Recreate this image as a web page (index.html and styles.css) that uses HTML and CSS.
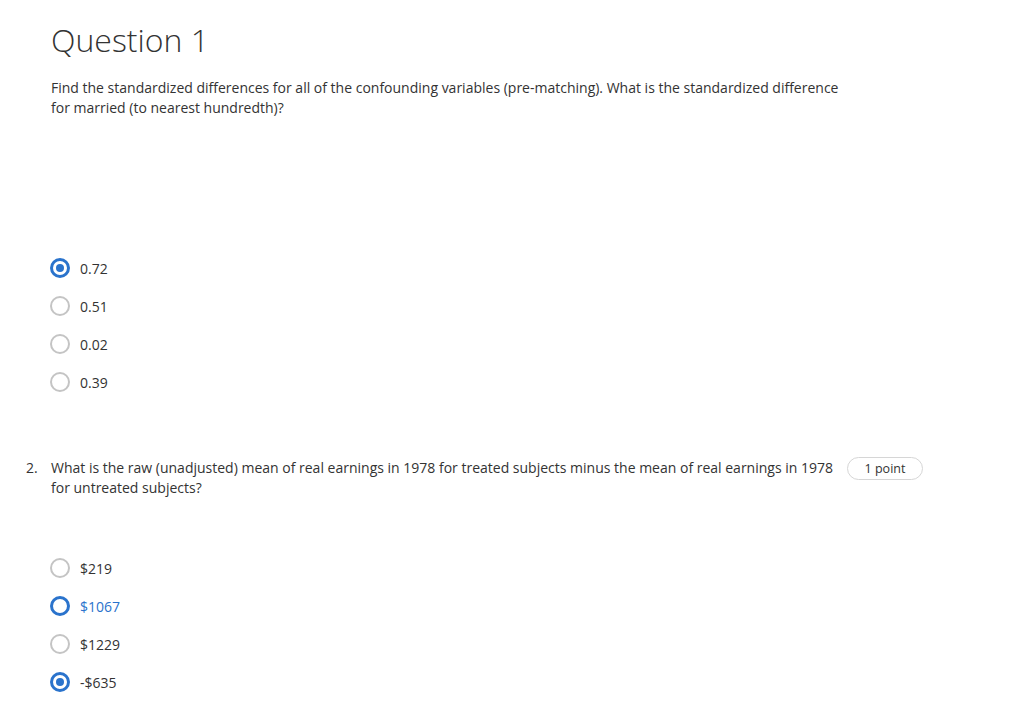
FILE: index.html
```html
<!DOCTYPE html>
<html>
<head>
<meta charset="utf-8">
<link rel="stylesheet" href="styles.css">
</head>
<body>
<div class="page">
  <h1 class="title">Question 1</h1>
  <p class="prompt">Find the standardized differences for all of the confounding variables (pre-matching). What is the standardized difference for married (to nearest hundredth)?</p>
  <div class="options first">
    <div class="option"><span class="radio checked"></span><span class="label">0.72</span></div>
    <div class="option"><span class="radio"></span><span class="label">0.51</span></div>
    <div class="option"><span class="radio"></span><span class="label">0.02</span></div>
    <div class="option"><span class="radio"></span><span class="label">0.39</span></div>
  </div>
  <div class="question">
    <span class="num">2.</span>
    <p class="prompt q2">What is the raw (unadjusted) mean of real earnings in 1978 for treated subjects minus the mean of real earnings in 1978 for untreated subjects?</p>
    <span class="badge">1 point</span>
  </div>
  <div class="options second">
    <div class="option"><span class="radio"></span><span class="label">$219</span></div>
    <div class="option"><span class="radio focus"></span><span class="label blue">$1067</span></div>
    <div class="option"><span class="radio"></span><span class="label">$1229</span></div>
    <div class="option"><span class="radio checked"></span><span class="label">-$635</span></div>
  </div>
</div>
</body>
</html>
```
FILE: styles.css
```css
html, body {
  margin: 0;
  padding: 0;
  background: #fff;
}
body {
  font-family: "Open Sans", "Liberation Sans", sans-serif;
  color: #333;
}
.page {
  padding: 18px 0 0 51px;
}
.title {
  margin: 0;
  font-size: 32px;
  font-weight: 300;
  line-height: 44px;
  color: #333;
}
.prompt {
  margin: 16px 0 0 0;
  width: 795px;
  font-size: 14px;
  line-height: 20px;
}
.options {
  display: flex;
  flex-direction: column;
}
.options.first {
  margin-top: 131px;
}
.option {
  display: flex;
  align-items: center;
  height: 38px;
  margin-left: -1px;
}
.radio {
  width: 20px;
  height: 20px;
  box-sizing: border-box;
  border: 2px solid #c4c4c4;
  border-radius: 50%;
  margin-right: 10px;
  display: flex;
  align-items: center;
  justify-content: center;
}
.radio.checked {
  border: 3px solid #2a73cc;
}
.radio.checked::after {
  content: "";
  width: 8px;
  height: 8px;
  border-radius: 50%;
  background: #2a73cc;
}
.radio.focus {
  border: 3px solid #2a73cc;
}
.label {
  font-size: 14px;
  color: #333;
}
.label.blue {
  color: #2a73cc;
}
.question {
  display: flex;
  align-items: flex-start;
  margin-top: 57px;
  position: relative;
}
.num {
  position: absolute;
  left: -25px;
  top: 0;
  font-size: 14px;
  line-height: 20px;
}
.prompt.q2 {
  margin: 0;
}
.badge {
  margin-left: 1px;
  margin-top: -1px;
  width: 76px;
  height: 23px;
  box-sizing: border-box;
  border: 1px solid #d6d6d6;
  border-radius: 12px;
  font-size: 12.5px;
  display: flex;
  align-items: center;
  justify-content: center;
}
.options.second {
  margin-top: 51px;
}
```
